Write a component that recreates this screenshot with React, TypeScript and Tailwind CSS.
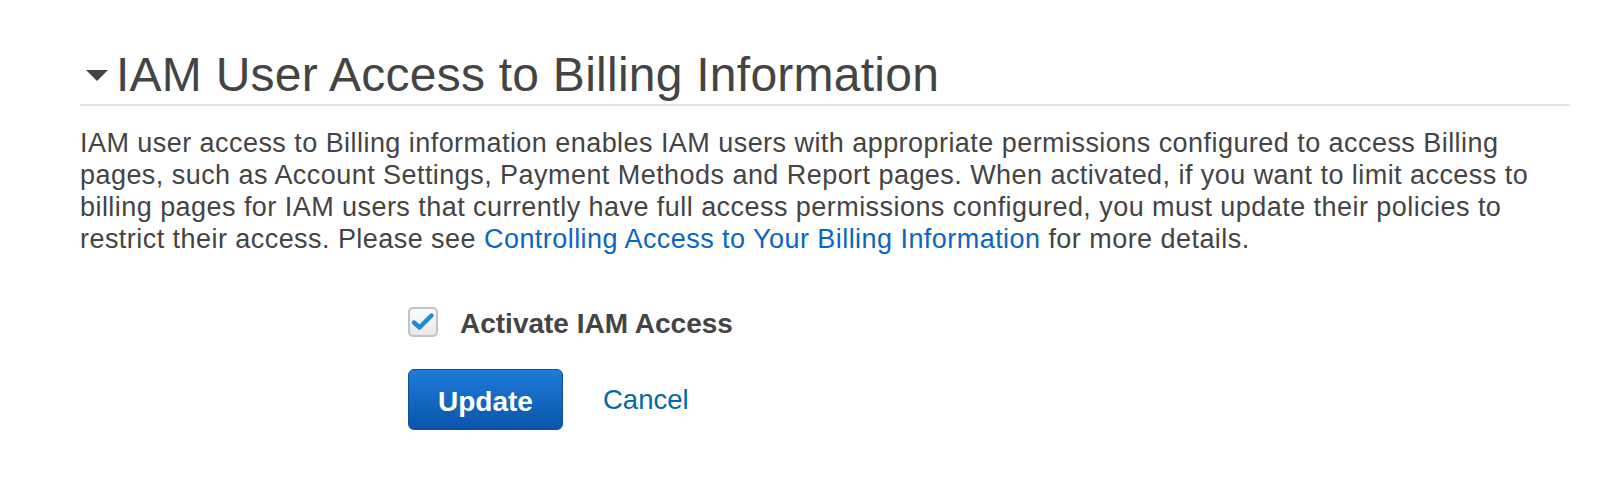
export default function App() {
  return (
    <div className="min-h-[480px] w-[1624px] bg-white font-['Liberation_Sans',Arial,sans-serif] text-[#444]">
      <div className="w-[1570px] pl-[80px] pt-[51px]">
        <div className="flex items-center border-b-2 border-[#e2e2e2] pb-[5px]">
          <svg
            className="ml-[6px] mr-[8px] mt-[1px]"
            width="22"
            height="11"
            viewBox="0 0 22 11"
            aria-hidden
          >
            <path d="M0 0 H22 L11 11 Z" fill="#444" />
          </svg>
          <h1 className="text-[48px] leading-[48px] font-normal tracking-[0.25px]">
            IAM User Access to Billing Information
          </h1>
        </div>

        <p className="mt-[21px] text-[27px] leading-[32px] tracking-[0.45px]">
          IAM user access to Billing information enables IAM users with appropriate permissions configured
          to access Billing pages, such as Account Settings, Payment Methods and Report pages. When activated,
          if you want to limit access to billing pages for IAM users that currently have full access
          permissions configured, you must update their policies to restrict their access. Please see{" "}
          <a href="#" className="text-[#0a66c2]">
            Controlling Access to Your Billing Information
          </a>{" "}
          for more details.
        </p>

        <div className="ml-[328px] mt-[52px] flex flex-col">
          <label className="flex h-[30px] items-center">
            <span className="grid h-[30px] w-[30px] place-items-center rounded-[5px] border-2 border-[#c4c4c4] bg-gradient-to-b from-[#fbfbfb] to-[#e8e8e8]">
              <svg width="26" height="22" viewBox="0 0 26 22" aria-hidden>
                <path
                  d="M4 11.5 L9.5 16.5 L21.5 4.5"
                  fill="none"
                  stroke="#1a8ad9"
                  strokeWidth="4.4"
                  strokeLinecap="round"
                  strokeLinejoin="round"
                />
              </svg>
            </span>
            <span className="ml-[22px] mt-[4px] text-[28px] font-bold leading-[30px]">
              Activate IAM Access
            </span>
          </label>

          <div className="mt-[32px] flex items-center">
            <button className="h-[61px] w-[155px] rounded-[6px] border border-[#0b4f9c] bg-gradient-to-b from-[#1f7bd9] to-[#0a55ab] pt-[4px] text-[28px] font-bold text-white">
              Update
            </button>
            <a href="#" className="ml-[40px] text-[27.5px] leading-[30px] text-[#006aa6]">
              Cancel
            </a>
          </div>
        </div>
      </div>
    </div>
  );
}
